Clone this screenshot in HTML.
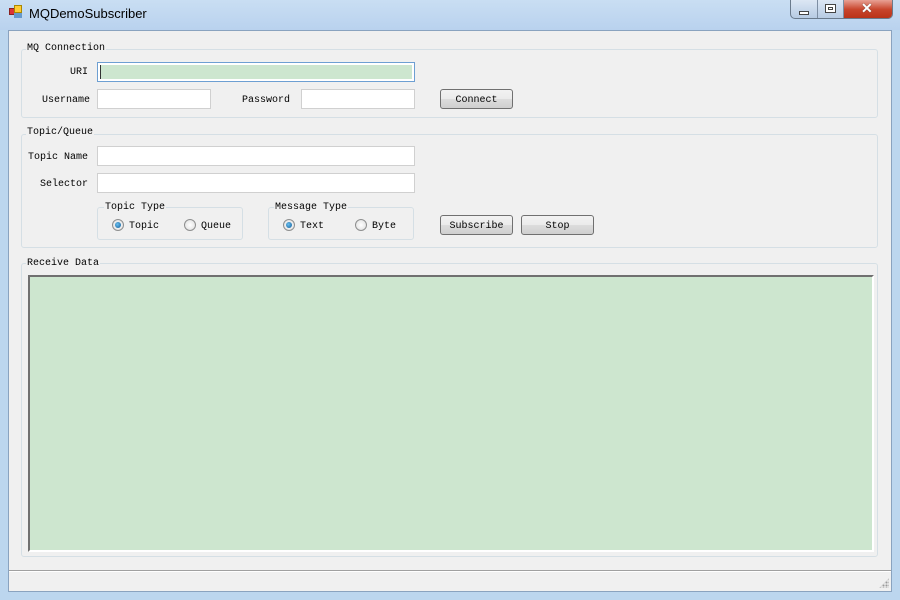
<!DOCTYPE html>
<html><head><style>
*{margin:0;padding:0;box-sizing:border-box}
body{width:900px;height:600px;position:relative;overflow:hidden;background:#bcd6ee;font-family:"Liberation Mono","Noto Sans CJK SC",monospace;font-size:10px;color:#000}
.a{position:absolute}
.gb{position:absolute;border:1px solid #d5dfe5;border-radius:3px}
.lbl{position:absolute;background:#f0f0f0;padding:0 1px;line-height:12px}
.tb{position:absolute;background:#fff;border:1px solid #d0d0d0;height:20px}
.btn{position:absolute;height:20px;border:1px solid #707070;border-radius:3px;background:linear-gradient(#f2f2f2,#ebebeb 50%,#dddddd 50%,#cfcfcf);text-align:center;line-height:22px}
.rd{position:absolute;width:12px;height:12px;border-radius:50%;border:1px solid #8e8f8f;background:radial-gradient(#fff,#dcdcdc)}
.rd.on::after{content:"";position:absolute;left:2px;top:2px;width:6px;height:6px;border-radius:50%;background:radial-gradient(circle at 40% 40%,#6ac0f0,#0f5a96)}
.t{position:absolute;line-height:12px}
</style></head><body>
<div class="a" style="left:0;top:0;width:900px;height:30px;background:linear-gradient(#c9def3,#b9d2ee)"></div>
<div class="a" style="left:9px;top:8px;width:7px;height:7px;background:#d33;border:1px solid #822"></div>
<div class="a" style="left:14px;top:5px;width:8px;height:8px;background:#fc3;border:1px solid #a80"></div>
<div class="a" style="left:14px;top:13px;width:8px;height:5px;background:#69c"></div>
<div class="a" style="left:29px;top:6px;font-family:'Liberation Sans',sans-serif;font-size:13px;">MQDemoSubscriber</div>
<div class="a" style="left:790px;top:0;width:103px;height:19px;border:1px solid #6a7a8c;border-top:none;border-radius:0 0 5px 5px;overflow:hidden;background:linear-gradient(#dce7f4,#b7cbe3)">
 <div class="a" style="left:26px;top:0;width:1px;height:19px;background:#7d8ea3"></div>
 <div class="a" style="left:52px;top:0;width:1px;height:19px;background:#7d8ea3"></div>
 <div class="a" style="left:53px;top:0;width:50px;height:19px;background:linear-gradient(#e8a194,#c8452c 50%,#b83016)"></div>
 <div class="a" style="left:8px;top:11px;width:10px;height:4px;background:#fff;border:1px solid #444"></div>
 <div class="a" style="left:34px;top:4px;width:11px;height:9px;border:1px solid #444;background:#fff"><div class="a" style="left:2px;top:2px;width:5px;height:3px;border:1px solid #444"></div></div>
 <div class="a" style="left:70px;top:0px;color:#fff;font:bold 14px 'Liberation Sans',sans-serif;text-shadow:0 0 1px #333">✕</div>
</div>
<div class="a" style="left:8px;top:30px;width:884px;height:562px;background:#f0f0f0;border:1px solid #8aa3bf"></div>

<div class="gb" style="left:21px;top:49px;width:857px;height:69px"></div>
<div class="lbl" style="left:26px;top:43px">MQ Connection</div>
<div class="t" style="left:70px;top:67px">URI</div>
<div class="tb" style="left:97px;top:62px;width:318px;border-color:#6d9fd2;padding:2px"><div style="background:#cde6cf;height:14px;border-left:1px solid #333"></div></div>
<div class="t" style="left:42px;top:95px">Username</div>
<div class="tb" style="left:97px;top:89px;width:114px"></div>
<div class="t" style="left:242px;top:95px">Password</div>
<div class="tb" style="left:301px;top:89px;width:114px"></div>
<div class="btn" style="left:440px;top:89px;width:73px">Connect</div>

<div class="gb" style="left:21px;top:134px;width:857px;height:114px"></div>
<div class="lbl" style="left:26px;top:127px">Topic/Queue</div>
<div class="t" style="left:28px;top:152px">Topic Name</div>
<div class="tb" style="left:97px;top:146px;width:318px"></div>
<div class="t" style="left:40px;top:179px">Selector</div>
<div class="tb" style="left:97px;top:173px;width:318px"></div>
<div class="gb" style="left:97px;top:207px;width:146px;height:33px"></div>
<div class="lbl" style="left:104px;top:202px">Topic Type</div>
<div class="rd on" style="left:112px;top:219px"></div><div class="t" style="left:129px;top:221px">Topic</div>
<div class="rd" style="left:184px;top:219px"></div><div class="t" style="left:201px;top:221px">Queue</div>
<div class="gb" style="left:268px;top:207px;width:146px;height:33px"></div>
<div class="lbl" style="left:274px;top:202px">Message Type</div>
<div class="rd on" style="left:283px;top:219px"></div><div class="t" style="left:300px;top:221px">Text</div>
<div class="rd" style="left:355px;top:219px"></div><div class="t" style="left:372px;top:221px">Byte</div>
<div class="btn" style="left:440px;top:215px;width:73px">Subscribe</div>
<div class="btn" style="left:521px;top:215px;width:73px">Stop</div>

<div class="gb" style="left:21px;top:263px;width:857px;height:294px"></div>
<div class="lbl" style="left:26px;top:258px">Receive Data</div>
<div class="a" style="left:28px;top:275px;width:846px;height:277px;background:#cde6cf;border:2px solid;border-color:#707070 #fff #fff #707070"></div>

<div class="a" style="left:9px;top:570px;width:882px;height:1px;background:#a0a0a0"></div>
<div class="a" style="left:9px;top:571px;width:882px;height:1px;background:#fff"></div>
<div class="a" style="left:879px;top:578px;width:10px;height:10px;background:radial-gradient(circle,#999 1px,transparent 1.2px) 0 0/3px 3px;clip-path:polygon(100% 0,100% 100%,0 100%)"></div>
</body></html>
